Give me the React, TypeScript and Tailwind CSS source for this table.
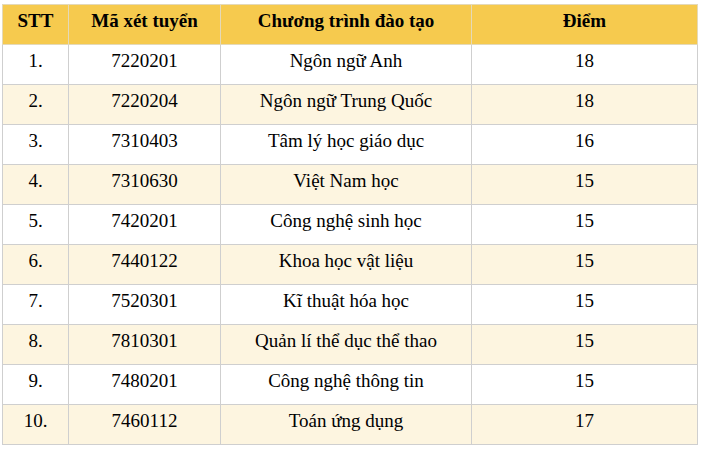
import * as React from "react"

type Row = { stt: string; code: string; program: string; score: string }

const rows: Row[] = [
  { stt: "1.", code: "7220201", program: "Ngôn ngữ Anh", score: "18" },
  { stt: "2.", code: "7220204", program: "Ngôn ngữ Trung Quốc", score: "18" },
  { stt: "3.", code: "7310403", program: "Tâm lý học giáo dục", score: "16" },
  { stt: "4.", code: "7310630", program: "Việt Nam học", score: "15" },
  { stt: "5.", code: "7420201", program: "Công nghệ sinh học", score: "15" },
  { stt: "6.", code: "7440122", program: "Khoa học vật liệu", score: "15" },
  { stt: "7.", code: "7520301", program: "Kĩ thuật hóa học", score: "15" },
  { stt: "8.", code: "7810301", program: "Quản lí thể dục thể thao", score: "15" },
  { stt: "9.", code: "7480201", program: "Công nghệ thông tin", score: "15" },
  { stt: "10.", code: "7460112", program: "Toán ứng dụng", score: "17" },
]

const cell = "h-10 border border-[#cfcfcf] px-2 pt-[5px] align-top text-center leading-[22px]"
const head = "h-10 border border-[#e4d9b8] px-2 pt-[5px] align-top text-center leading-[22px] font-bold"

export default function App() {
  return (
    <div className="bg-white pl-[2px] pt-[4px] h-[450px] w-[702px] font-['Liberation_Serif','Times_New_Roman',serif] text-[19px] text-black">
      <table className="w-[695px] table-fixed border-collapse">
        <colgroup>
          <col className="w-[66px]" />
          <col className="w-[152px]" />
          <col className="w-[251px]" />
          <col className="w-[226px]" />
        </colgroup>
        <thead>
          <tr className="bg-[#f6ca4e]">
            <th className={head}>STT</th>
            <th className={head}>Mã xét tuyển</th>
            <th className={head}>Chương trình đào tạo</th>
            <th className={head}>Điểm</th>
          </tr>
        </thead>
        <tbody>
          {rows.map((r, i) => (
            <tr key={r.stt} className={i % 2 === 1 ? "bg-[#fdf5e0]" : "bg-white"}>
              <td className={cell}>{r.stt}</td>
              <td className={cell}>{r.code}</td>
              <td className={cell}>{r.program}</td>
              <td className={cell}>{r.score}</td>
            </tr>
          ))}
        </tbody>
      </table>
    </div>
  )
}
